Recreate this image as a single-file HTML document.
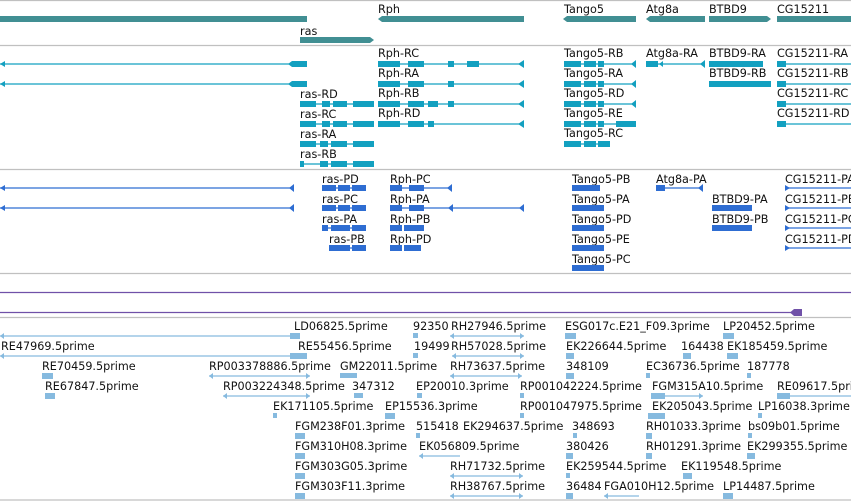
<!DOCTYPE html>
<html><head><meta charset="utf-8"><style>
html,body{margin:0;padding:0;background:#fff;width:851px;height:501px;overflow:hidden}
svg{display:block}
text{font-family:"DejaVu Sans","Liberation Sans",sans-serif;font-size:11.2px;fill:#111}
.sep{stroke:#c0c0c0;stroke-width:1.3}
.g{fill:#418f93}
.t{fill:#13a0c0}.tl{stroke:#13a0c0;stroke-width:1.3}
.p{fill:#2e6dd2}.pl{stroke:#2e6dd2;stroke-width:1.3}
.e{fill:#86badf}.el{stroke:#86badf;stroke-width:1.3}
</style></head><body>
<svg width="851" height="501" xmlns="http://www.w3.org/2000/svg">
<line class="sep" x1="0" y1="0.5" x2="851" y2="0.5"/>
<line class="sep" x1="0" y1="45.5" x2="851" y2="45.5"/>
<line class="sep" x1="0" y1="169.5" x2="851" y2="169.5"/>
<line class="sep" x1="0" y1="273.5" x2="851" y2="273.5"/>
<line class="sep" x1="0" y1="317.5" x2="851" y2="317.5"/>
<line class="sep" x1="0" y1="500" x2="851" y2="500"/>
<line x1="0" y1="292.5" x2="851" y2="292.5" stroke="#7051a8" stroke-width="1.3"/>
<line x1="0" y1="312.5" x2="800" y2="312.5" stroke="#7051a8" stroke-width="1.3"/>
<polygon points="790,312.5 794,309 802,309 802,316 794,316" fill="#7051a8"/>

<rect class="g" x="0" y="16" width="307" height="6"/>
<text x="378" y="13">Rph</text>
<polygon class="g" points="378,19 382,16 524,16 524,22 382,22"/>
<text x="300" y="35">ras</text>
<polygon class="g" points="300,37 370,37 374,40 370,43 300,43"/>
<text x="564" y="13">Tango5</text>
<polygon class="g" points="563,19 567,16 636,16 636,22 567,22"/>
<text x="646" y="13">Atg8a</text>
<polygon class="g" points="646,19 650,16 705,16 705,22 650,22"/>
<text x="709" y="13">BTBD9</text>
<polygon class="g" points="709,16 767,16 771,19 767,22 709,22"/>
<text x="777" y="13">CG15211</text>
<rect class="g" x="777" y="16" width="74" height="6"/>

<line class="tl" x1="0" y1="64" x2="300" y2="64"/><polygon class="t" points="0,64 5,61 5,67"/><polygon class="t" points="288,64 292,61 307,61 307,67 292,67"/>
<line class="tl" x1="0" y1="84" x2="300" y2="84"/><polygon class="t" points="0,84 5,81 5,87"/><polygon class="t" points="288,84 292,81 307,81 307,87 292,87"/>

<g>
<text x="378" y="57">Rph-RC</text><text x="378" y="77">Rph-RA</text><text x="378" y="97">Rph-RB</text><text x="378" y="117">Rph-RD</text>
<line class="tl" x1="378" y1="64" x2="524" y2="64"/><line class="tl" x1="378" y1="84" x2="524" y2="84"/><line class="tl" x1="378" y1="104" x2="524" y2="104"/><line class="tl" x1="378" y1="124" x2="524" y2="124"/>
<rect class="t" x="378" y="61" width="22" height="6"/><rect class="t" x="408" y="61" width="16" height="6"/><rect class="t" x="448" y="61" width="6" height="6"/><rect class="t" x="467" y="61" width="12" height="6"/><polygon class="t" points="518,64 524,60 524,68"/>
<rect class="t" x="378" y="81" width="22" height="6"/><rect class="t" x="408" y="81" width="16" height="6"/><rect class="t" x="448" y="81" width="6" height="6"/><polygon class="t" points="518,84 524,80 524,88"/>
<rect class="t" x="378" y="101" width="22" height="6"/><rect class="t" x="408" y="101" width="16" height="6"/><rect class="t" x="428" y="101" width="10" height="6"/><rect class="t" x="448" y="101" width="6" height="6"/><polygon class="t" points="518,104 524,100 524,108"/>
<rect class="t" x="378" y="121" width="22" height="6"/><rect class="t" x="408" y="121" width="16" height="6"/><rect class="t" x="428" y="121" width="6" height="6"/><polygon class="t" points="518,124 524,120 524,128"/>
</g>
<g>
<text x="300" y="98">ras-RD</text><text x="300" y="118">ras-RC</text><text x="300" y="138">ras-RA</text><text x="300" y="158">ras-RB</text>
<line class="tl" x1="300" y1="104" x2="374" y2="104"/><line class="tl" x1="300" y1="124" x2="374" y2="124"/><line class="tl" x1="300" y1="144" x2="374" y2="144"/><line class="tl" x1="300" y1="164" x2="374" y2="164"/>
<rect class="t" x="300" y="101" width="16" height="6"/><rect class="t" x="322" y="101" width="8" height="6"/><rect class="t" x="333" y="101" width="14" height="6"/><rect class="t" x="353" y="101" width="21" height="6"/>
<rect class="t" x="300" y="121" width="16" height="6"/><rect class="t" x="322" y="121" width="8" height="6"/><rect class="t" x="333" y="121" width="14" height="6"/><rect class="t" x="353" y="121" width="21" height="6"/>
<rect class="t" x="300" y="141" width="16" height="6"/><rect class="t" x="320" y="141" width="8" height="6"/><rect class="t" x="331" y="141" width="16" height="6"/><rect class="t" x="353" y="141" width="21" height="6"/>
<rect class="t" x="300" y="161" width="4" height="6"/><rect class="t" x="320" y="161" width="8" height="6"/><rect class="t" x="331" y="161" width="16" height="6"/><rect class="t" x="353" y="161" width="21" height="6"/>
</g>
<g>
<text x="564" y="57">Tango5-RB</text><text x="564" y="77">Tango5-RA</text><text x="564" y="97">Tango5-RD</text><text x="564" y="117">Tango5-RE</text><text x="564" y="137">Tango5-RC</text>
<line class="tl" x1="564" y1="64" x2="636" y2="64"/><line class="tl" x1="564" y1="84" x2="636" y2="84"/><line class="tl" x1="564" y1="104" x2="636" y2="104"/><line class="tl" x1="564" y1="124" x2="636" y2="124"/><line class="tl" x1="564" y1="144" x2="610" y2="144"/>
<rect class="t" x="564" y="61" width="17" height="6"/><rect class="t" x="584" y="61" width="12" height="6"/><rect class="t" x="598" y="61" width="6" height="6"/><polygon class="t" points="631,64 636,60 636,68"/>
<rect class="t" x="564" y="81" width="17" height="6"/><rect class="t" x="584" y="81" width="12" height="6"/><rect class="t" x="598" y="81" width="6" height="6"/><polygon class="t" points="631,84 636,80 636,88"/>
<rect class="t" x="564" y="101" width="17" height="6"/><rect class="t" x="584" y="101" width="12" height="6"/><rect class="t" x="598" y="101" width="6" height="6"/><polygon class="t" points="631,104 636,100 636,108"/>
<rect class="t" x="564" y="121" width="17" height="6"/><rect class="t" x="584" y="121" width="12" height="6"/><rect class="t" x="598" y="121" width="6" height="6"/><rect class="t" x="616" y="121" width="20" height="6"/>
<rect class="t" x="564" y="141" width="17" height="6"/><rect class="t" x="584" y="141" width="12" height="6"/><rect class="t" x="598" y="141" width="12" height="6"/>
<text x="646" y="57">Atg8a-RA</text>
<line class="tl" x1="646" y1="64" x2="705" y2="64"/><rect class="t" x="646" y="61" width="12" height="6"/><polygon class="t" points="659,64 663,61 663,67"/><polygon class="t" points="700,64 705,60 705,68"/>
<text x="709" y="57">BTBD9-RA</text><text x="709" y="77">BTBD9-RB</text>
<rect class="t" x="709" y="61" width="54" height="6"/><rect class="t" x="709" y="81" width="62" height="6"/>
<text x="777" y="57">CG15211-RA</text><text x="777" y="77">CG15211-RB</text><text x="777" y="97">CG15211-RC</text><text x="777" y="117">CG15211-RD</text>
<line class="tl" x1="777" y1="64" x2="851" y2="64"/><line class="tl" x1="777" y1="84" x2="851" y2="84"/><line class="tl" x1="777" y1="104" x2="851" y2="104"/><line class="tl" x1="777" y1="124" x2="851" y2="124"/>
<rect class="t" x="777" y="61" width="9" height="6"/><rect class="t" x="777" y="81" width="9" height="6"/><rect class="t" x="777" y="101" width="9" height="6"/><rect class="t" x="777" y="121" width="9" height="6"/>
</g>

<line class="pl" x1="0" y1="188" x2="293" y2="188"/><polygon class="p" points="0,188 5,185 5,191"/><polygon class="p" points="289,188 294,184 294,192"/>
<line class="pl" x1="0" y1="208" x2="293" y2="208"/><polygon class="p" points="0,208 5,205 5,211"/><polygon class="p" points="289,208 294,204 294,212"/>
<text x="322" y="183">ras-PD</text><text x="322" y="203">ras-PC</text><text x="322" y="223">ras-PA</text><text x="329" y="243">ras-PB</text>
<g>
<line class="pl" x1="322" y1="188" x2="366" y2="188"/><rect class="p" x="322" y="185" width="14" height="6"/><rect class="p" x="338" y="185" width="12" height="6"/><rect class="p" x="352" y="185" width="14" height="6"/>
<line class="pl" x1="322" y1="208" x2="366" y2="208"/><rect class="p" x="322" y="205" width="14" height="6"/><rect class="p" x="338" y="205" width="12" height="6"/><rect class="p" x="352" y="205" width="14" height="6"/>
<line class="pl" x1="322" y1="228" x2="366" y2="228"/><rect class="p" x="322" y="225" width="6" height="6"/><rect class="p" x="331" y="225" width="19" height="6"/><rect class="p" x="352" y="225" width="14" height="6"/>
<line class="pl" x1="329" y1="248" x2="366" y2="248"/><rect class="p" x="329" y="245" width="21" height="6"/><rect class="p" x="352" y="245" width="14" height="6"/>
</g>
<text x="390" y="183">Rph-PC</text><text x="390" y="203">Rph-PA</text><text x="390" y="223">Rph-PB</text><text x="390" y="243">Rph-PD</text>
<g>
<line class="pl" x1="390" y1="188" x2="452" y2="188"/><rect class="p" x="390" y="185" width="12" height="6"/><rect class="p" x="409" y="185" width="15" height="6"/><polygon class="p" points="447,188 452,184 452,192"/>
<line class="pl" x1="390" y1="208" x2="524" y2="208"/><rect class="p" x="390" y="205" width="12" height="6"/><rect class="p" x="409" y="205" width="15" height="6"/><polygon class="p" points="448,208 453,204 453,212"/><polygon class="p" points="519,208 524,204 524,212"/>
<rect class="p" x="390" y="225" width="12" height="6"/><rect class="p" x="404" y="225" width="20" height="6"/>
<rect class="p" x="390" y="245" width="12" height="6"/><rect class="p" x="404" y="245" width="17" height="6"/>
</g>
<text x="572" y="183">Tango5-PB</text><text x="572" y="203">Tango5-PA</text><text x="572" y="223">Tango5-PD</text><text x="572" y="243">Tango5-PE</text><text x="572" y="263">Tango5-PC</text>
<rect class="p" x="572" y="185" width="28" height="6"/><rect class="p" x="572" y="205" width="32" height="6"/><rect class="p" x="572" y="225" width="32" height="6"/><rect class="p" x="572" y="245" width="32" height="6"/><rect class="p" x="572" y="265" width="32" height="6"/>
<text x="656" y="183">Atg8a-PA</text>
<line class="pl" x1="656" y1="188" x2="703" y2="188"/><rect class="p" x="656" y="185" width="9" height="6"/><polygon class="p" points="698,188 703,184 703,192"/>
<text x="712" y="203">BTBD9-PA</text><text x="712" y="223">BTBD9-PB</text>
<rect class="p" x="712" y="205" width="40" height="6"/><rect class="p" x="712" y="225" width="40" height="6"/>
<text x="785" y="183">CG15211-PA</text><text x="785" y="203">CG15211-PB</text><text x="785" y="223">CG15211-PC</text><text x="785" y="243">CG15211-PD</text>
<line class="pl" x1="785" y1="188" x2="851" y2="188"/><line class="pl" x1="785" y1="208" x2="851" y2="208"/><line class="pl" x1="785" y1="228" x2="851" y2="228"/><line class="pl" x1="785" y1="248" x2="851" y2="248"/>
<polygon class="p" points="785,185 790,188 785,191"/><polygon class="p" points="785,205 790,208 785,211"/><polygon class="p" points="785,225 790,228 785,231"/><polygon class="p" points="785,245 790,248 785,251"/>

<text x="294" y="330">LD06825.5prime</text><text x="413" y="330">92350</text><text x="451" y="330">RH27946.5prime</text><text x="565" y="330">ESG017c.E21_F09.3prime</text><text x="723" y="330">LP20452.5prime</text>
<text x="1" y="350">RE47969.5prime</text><text x="298" y="350">RE55456.5prime</text><text x="414" y="350">19499</text><text x="451" y="350">RH57028.5prime</text><text x="566" y="350">EK226644.5prime</text><text x="681" y="350">164438</text><text x="727" y="350">EK185459.5prime</text>
<text x="42" y="370">RE70459.5prime</text><text x="209" y="370">RP003378886.5prime</text><text x="340" y="370">GM22011.5prime</text><text x="450" y="370">RH73637.5prime</text><text x="566" y="370">348109</text><text x="646" y="370">EC36736.5prime</text><text x="747" y="370">187778</text>
<text x="45" y="390">RE67847.5prime</text><text x="223" y="390">RP003224348.5prime</text><text x="352" y="390">347312</text><text x="416" y="390">EP20010.3prime</text><text x="520" y="390">RP001042224.5prime</text><text x="652" y="390">FGM315A10.5prime</text><text x="777" y="390">RE09617.5prime</text>
<text x="273" y="410">EK171105.5prime</text><text x="385" y="410">EP15536.3prime</text><text x="520" y="410">RP001047975.5prime</text><text x="652" y="410">EK205043.5prime</text><text x="758" y="410">LP16038.3prime</text>
<text x="295" y="430">FGM238F01.3prime</text><text x="416" y="430">515418</text><text x="463" y="430">EK294637.5prime</text><text x="572" y="430">348693</text><text x="646" y="430">RH01033.3prime</text><text x="748" y="430">bs09b01.5prime</text>
<text x="295" y="450">FGM310H08.3prime</text><text x="419" y="450">EK056809.5prime</text><text x="566" y="450">380426</text><text x="646" y="450">RH01291.3prime</text><text x="747" y="450">EK299355.5prime</text>
<text x="295" y="470">FGM303G05.3prime</text><text x="450" y="470">RH71732.5prime</text><text x="566" y="470">EK259544.5prime</text><text x="681" y="470">EK119548.5prime</text>
<text x="295" y="490">FGM303F11.3prime</text><text x="450" y="490">RH38767.5prime</text><text x="566" y="490">36484</text><text x="604" y="490">FGA010H12.5prime</text><text x="723" y="490">LP14487.5prime</text>
<g>
<line class="el" x1="0" y1="336" x2="294" y2="336"/><polygon class="e" points="0,336 4,333 4,339"/><rect class="e" x="290" y="333" width="10" height="6"/>
<rect class="e" x="413" y="333" width="5" height="5"/><line class="el" x1="450" y1="336" x2="524" y2="336"/><polygon class="e" points="450,336 454,333 454,339"/><polygon class="e" points="524,336 520,333 520,339"/>
<rect class="e" x="565" y="333" width="11" height="6"/><rect class="e" x="723" y="333" width="11" height="6"/>
<line class="el" x1="0" y1="356" x2="298" y2="356"/><polygon class="e" points="0,356 4,353 4,359"/><rect class="e" x="290" y="353" width="17" height="6"/>
<rect class="e" x="413" y="353" width="5" height="5"/><line class="el" x1="452" y1="356" x2="524" y2="356"/><polygon class="e" points="452,356 456,353 456,359"/><polygon class="e" points="524,356 520,353 520,359"/>
<rect class="e" x="566" y="353" width="8" height="6"/><rect class="e" x="683" y="353" width="8" height="6"/><rect class="e" x="727" y="353" width="11" height="6"/>
<rect class="e" x="42" y="373" width="11" height="6"/><line class="el" x1="209" y1="376" x2="310" y2="376"/><polygon class="e" points="209,376 213,373 213,379"/><polygon class="e" points="310,376 306,373 306,379"/><rect class="e" x="340" y="373" width="17" height="5"/>
<line class="el" x1="450" y1="376" x2="522" y2="376"/><polygon class="e" points="450,376 454,373 454,379"/><polygon class="e" points="522,376 518,373 518,379"/><rect class="e" x="566" y="373" width="8" height="6"/><rect class="e" x="646" y="373" width="4" height="5"/><rect class="e" x="747" y="373" width="4" height="5"/>
<rect class="e" x="45" y="393" width="10" height="6"/><line class="el" x1="223" y1="396" x2="310" y2="396"/><polygon class="e" points="223,396 227,393 227,399"/><polygon class="e" points="310,396 306,393 306,399"/><rect class="e" x="354" y="393" width="9" height="5"/>
<rect class="e" x="417" y="393" width="5" height="5"/><rect class="e" x="520" y="393" width="4" height="5"/><line class="el" x1="651" y1="396" x2="703" y2="396"/><rect class="e" x="651" y="393" width="14" height="6"/><polygon class="e" points="703,396 699,393 699,399"/>
<line class="el" x1="777" y1="396" x2="851" y2="396"/><rect class="e" x="777" y="393" width="13" height="6"/>
<rect class="e" x="273" y="413" width="4" height="5"/><rect class="e" x="385" y="413" width="10" height="6"/><rect class="e" x="520" y="413" width="4" height="5"/><rect class="e" x="648" y="413" width="17" height="6"/><rect class="e" x="758" y="413" width="4" height="5"/>
<rect class="e" x="295" y="433" width="10" height="6"/><rect class="e" x="416" y="433" width="4" height="5"/><rect class="e" x="573" y="433" width="4" height="5"/><rect class="e" x="646" y="433" width="6" height="6"/><rect class="e" x="748" y="433" width="4" height="5"/>
<rect class="e" x="295" y="453" width="10" height="6"/><line class="el" x1="419" y1="456" x2="460" y2="456"/><polygon class="e" points="419,456 423,453 423,459"/><rect class="e" x="566" y="453" width="7" height="6"/><rect class="e" x="646" y="453" width="6" height="6"/><rect class="e" x="747" y="453" width="8" height="6"/>
<rect class="e" x="295" y="473" width="10" height="6"/><line class="el" x1="450" y1="476" x2="523" y2="476"/><polygon class="e" points="450,476 454,473 454,479"/><polygon class="e" points="523,476 519,473 519,479"/><rect class="e" x="566" y="473" width="4" height="5"/><rect class="e" x="683" y="473" width="9" height="6"/>
<rect class="e" x="295" y="493" width="10" height="6"/><line class="el" x1="450" y1="496" x2="523" y2="496"/><polygon class="e" points="450,496 454,493 454,499"/><polygon class="e" points="523,496 519,493 519,499"/><rect class="e" x="566" y="493" width="7" height="6"/><line class="el" x1="604" y1="496" x2="639" y2="496"/><polygon class="e" points="604,496 608,493 608,499"/><rect class="e" x="723" y="493" width="10" height="6"/>
</g>
</svg>
</body></html>
